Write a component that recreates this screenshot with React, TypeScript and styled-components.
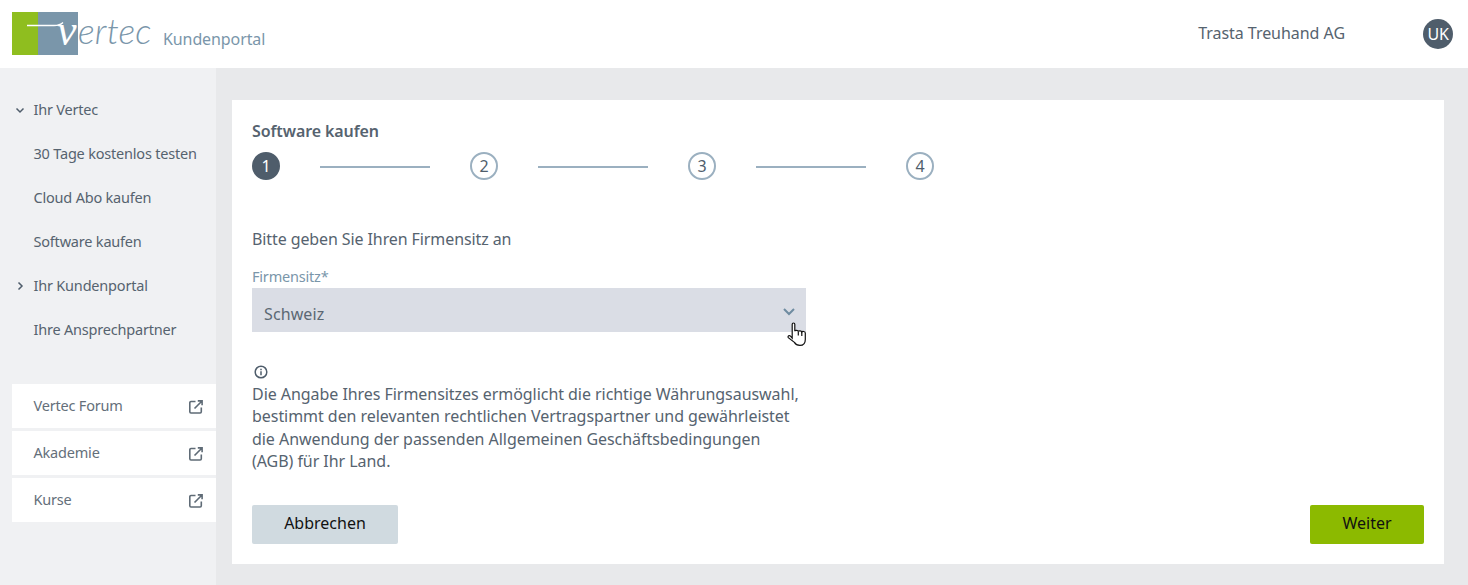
import React from 'react';
import styled, { createGlobalStyle } from 'styled-components';

const GlobalStyle = createGlobalStyle`
    html, body {
        margin: 0;
        padding: 0;
        background: #e8e9eb;
    }
    * {
        box-sizing: border-box;
    }
    body {
        font-family: "Noto Sans", "Open Sans", "Liberation Sans", sans-serif;
        font-size: 16px;
        color: #56636f;
    }
`;

const Page = styled.div`
    width: 1468px;
    height: 585px;
    overflow: hidden;
    display: flex;
    flex-direction: column;
`;

const Header = styled.header`
    height: 68px;
    flex: none;
    background: #fff;
    display: flex;
    align-items: center;
    padding-left: 12px;
`;

const LogoWrap = styled.div`
    position: relative;
    width: 66px;
    height: 43px;
    margin-top: -2px;
    flex: none;
    display: flex;
`;

const LogoGreen = styled.div`
    width: 26px;
    background: #8fbe1f;
`;

const LogoBlue = styled.div`
    width: 40px;
    background: #7a96aa;
`;

const LogoSwash = styled.svg`
    position: absolute;
    left: 0;
    top: 0;
`;

const LogoV = styled.span`
    position: absolute;
    left: 45px;
    top: -3px;
    font-family: "Liberation Serif", serif;
    font-style: italic;
    font-size: 44px;
    line-height: 44px;
    color: #fff;
`;

const LogoWord = styled.span`
    font-family: "Lato", sans-serif;
    font-style: italic;
    font-weight: 300;
    font-size: 35.5px;
    line-height: 43px;
    color: #7a96aa;
    margin-top: -8px;
    width: 85px;
    flex: none;
    letter-spacing: 0.2px;
`;

const PortalName = styled.span`
    font-size: 16px;
    color: #7a96aa;
    margin-top: 10px;
    letter-spacing: -0.1px;
`;

const CompanyName = styled.span`
    margin-left: auto;
    font-size: 16px;
    letter-spacing: -0.04px;
    margin-top: -3px;
`;

const Avatar = styled.div`
    width: 30px;
    height: 30px;
    border-radius: 50%;
    background: #4f5d6b;
    color: #fff;
    font-size: 16px;
    letter-spacing: -0.2px;
    display: flex;
    align-items: center;
    justify-content: center;
    margin-left: 78px;
    margin-right: 15px;
`;

const Body = styled.div`
    flex: 1;
    display: grid;
    grid-template-columns: 216px 1fr;
    min-height: 0;
`;

const Sidebar = styled.nav`
    background: #f0f1f3;
    padding-top: 19px;
    padding-left: 12px;
`;

const NavRow = styled.div`
    height: 44px;
    display: flex;
    align-items: center;
    padding-left: 21.5px;
    position: relative;
    font-size: 14.5px;
    letter-spacing: -0.2px;
    color: #56636f;
`;

const NavChevron = styled.svg`
    position: absolute;
    left: 2.5px;
    top: 18px;
`;

const LinkList = styled.div`
    margin-top: 33px;
    display: flex;
    flex-direction: column;
    gap: 3px;
`;

const LinkRow = styled.div`
    height: 44px;
    background: #fff;
    display: flex;
    align-items: center;
    justify-content: space-between;
    padding: 0 13px 2px 21.5px;
    font-size: 14.5px;
    letter-spacing: -0.2px;
    color: #646f7a;
`;

const LinkIcon = styled.svg`
    margin-top: 4px;
`;

const Main = styled.main`
    background: #e8e9eb;
    padding: 32px 24px 21px 16px;
`;

const Card = styled.section`
    background: #fff;
    height: 464px;
    padding: 20px;
    display: flex;
    flex-direction: column;
`;

const Title = styled.h1`
    margin: 0;
    font-size: 16px;
    line-height: 22px;
    font-weight: 600;
    letter-spacing: -0.1px;
    color: #56636f;
`;

const Stepper = styled.div`
    display: flex;
    align-items: center;
    gap: 40px;
    margin-top: 10px;
`;

const StepCircle = styled.div<{ $active?: boolean }>`
    width: 28px;
    height: 28px;
    border-radius: 50%;
    border: 2px solid ${props => (props.$active ? '#4f5d6b' : '#9bb0c0')};
    background: ${props => (props.$active ? '#4f5d6b' : '#fff')};
    color: ${props => (props.$active ? '#fff' : '#4f5d6b')};
    display: flex;
    align-items: center;
    justify-content: center;
    font-size: 16px;
`;

const StepLine = styled.div`
    width: 110px;
    height: 2px;
    margin-top: 1px;
    background: #9bb0c0;
`;

const Intro = styled.p`
    margin: 48px 0 0;
    font-size: 16px;
    line-height: 22px;
    letter-spacing: -0.1px;
`;

const FieldLabel = styled.label`
    margin-top: 16px;
    font-size: 14.5px;
    line-height: 20px;
    letter-spacing: -0.2px;
    color: #7a96aa;
`;

const SelectBox = styled.div`
    position: relative;
    width: 554px;
    height: 44px;
    margin-top: 2px;
    background: #dadde5;
    display: flex;
    align-items: center;
    justify-content: space-between;
    padding: 8px 10px 0 12px;
    font-size: 16px;
    letter-spacing: 0.1px;
    color: #5c6873;
`;

const SelectChevron = styled.svg`
    margin-top: -4px;
`;

const HandCursor = styled.svg`
    position: absolute;
    right: -1px;
    bottom: -15px;
`;

const InfoIcon = styled.svg`
    display: block;
    margin-top: 33px;
    margin-left: 2px;
`;

const InfoText = styled.p`
    margin: 4px 0 0;
    width: 556px;
    font-size: 16px;
    line-height: 22.4px;
    letter-spacing: -0.05px;
`;

const ButtonRow = styled.div`
    margin-top: auto;
    display: flex;
    justify-content: space-between;
`;

const Button = styled.button<{ $primary?: boolean }>`
    height: 39px;
    width: ${props => (props.$primary ? '114px' : '146px')};
    border: 0;
    border-radius: 2px;
    padding: 0 0 3px;
    background: ${props => (props.$primary ? '#8cba00' : '#d0dae0')};
    color: #111;
    font-family: inherit;
    font-size: 16px;
`;

const ExternalIcon = () => (
    <LinkIcon width="14" height="14" viewBox="0 0 14 14" fill="none" stroke="#5f6b76" strokeWidth="1.6">
        <path d="M6.5 1.500H2a1.200 1.200 0 0 0-1.200 1.200v9.100A1.200 1.200 0 0 0 2 13h9.100a1.200 1.200 0 0 0 1.200-1.200V7.500" />
        <path d="M5.500 8.500 13 1M8.800.900H13.100V5.200" />
    </LinkIcon>
);

const Chevron = ({ open }: { open: boolean }) => (
    <NavChevron width="10" height="10" viewBox="0 0 10 10" fill="none" stroke="#4f5d6b" strokeWidth="1.5">
        <path d={open ? 'M1.500 3.500 5 7l3.500-3.500' : 'M3.500 1.500 7 5 3.500 8.500'} />
    </NavChevron>
);

const navItems = [
    { label: 'Ihr Vertec', chevron: 'open' },
    { label: '30 Tage kostenlos testen' },
    { label: 'Cloud Abo kaufen' },
    { label: 'Software kaufen' },
    { label: 'Ihr Kundenportal', chevron: 'closed' },
    { label: 'Ihre Ansprechpartner' },
];

const externalLinks = ['Vertec Forum', 'Akademie', 'Kurse'];

const App: React.FC = () => {
    return (
        <>
            <GlobalStyle />
            <Page>
                <Header>
                    <LogoWrap>
                        <LogoGreen />
                        <LogoBlue />
                        <LogoV>v</LogoV>
                        <LogoSwash width="66" height="43" viewBox="0 0 66 43" fill="none">
                            <path d="M15 13.500H42c5 0 7-1 9-3" stroke="#fff" strokeWidth="1.300" />
                        </LogoSwash>
                    </LogoWrap>
                    <LogoWord>ertec</LogoWord>
                    <PortalName>Kundenportal</PortalName>
                    <CompanyName>Trasta Treuhand AG</CompanyName>
                    <Avatar>UK</Avatar>
                </Header>
                <Body>
                    <Sidebar>
                        {navItems.map(item => (
                            <NavRow key={item.label}>
                                {item.chevron && <Chevron open={item.chevron === 'open'} />}
                                {item.label}
                            </NavRow>
                        ))}
                        <LinkList>
                            {externalLinks.map(link => (
                                <LinkRow key={link}>
                                    {link}
                                    <ExternalIcon />
                                </LinkRow>
                            ))}
                        </LinkList>
                    </Sidebar>
                    <Main>
                        <Card>
                            <Title>Software kaufen</Title>
                            <Stepper>
                                <StepCircle $active>1</StepCircle>
                                <StepLine />
                                <StepCircle>2</StepCircle>
                                <StepLine />
                                <StepCircle>3</StepCircle>
                                <StepLine />
                                <StepCircle>4</StepCircle>
                            </Stepper>
                            <Intro>Bitte geben Sie Ihren Firmensitz an</Intro>
                            <FieldLabel>Firmensitz*</FieldLabel>
                            <SelectBox>
                                Schweiz
                                <SelectChevron width="14" height="10" viewBox="0 0 14 10" fill="none" stroke="#6f8ca1" strokeWidth="2">
                                    <path d="M2 2l5 5 5-5" />
                                </SelectChevron>
                                <HandCursor width="20" height="25" viewBox="0 0 20 25" fill="#fff" stroke="#111" strokeWidth="1.200">
                                    <path d="M5.200 2.200c0-1.600 2.600-1.600 2.600 0v7c.3-1.200 3.300-1.100 3.500.3.300-1.100 3.300-.9 3.500.5.500-1 3.500-.7 3.500.9v6.500c0 3.400-2 6-5.400 6-2.800 0-4.500-1.200-5.500-3L1.300 15.600c-.8-1.500 1-2.700 2.200-1.500l1.700 2z" />
                                    <path d="M11.300 9.500v4M14.800 10v4" fill="none" />
                                </HandCursor>
                            </SelectBox>
                            <InfoIcon width="14" height="14" viewBox="0 0 14 14" fill="none" stroke="#4f5d6b" strokeWidth="1.500">
                                <circle cx="7" cy="7" r="5.800" />
                                <path d="M7 6.200V10.200M7 3.700V5.200" />
                            </InfoIcon>
                            <InfoText>
                                Die Angabe Ihres Firmensitzes ermöglicht die richtige Währungsauswahl,
                                <br />
                                bestimmt den relevanten rechtlichen Vertragspartner und gewährleistet
                                <br />
                                die Anwendung der passenden Allgemeinen Geschäftsbedingungen
                                <br />
                                (AGB) für Ihr Land.
                            </InfoText>
                            <ButtonRow>
                                <Button>Abbrechen</Button>
                                <Button $primary>Weiter</Button>
                            </ButtonRow>
                        </Card>
                    </Main>
                </Body>
            </Page>
        </>
    );
};

export default App;
